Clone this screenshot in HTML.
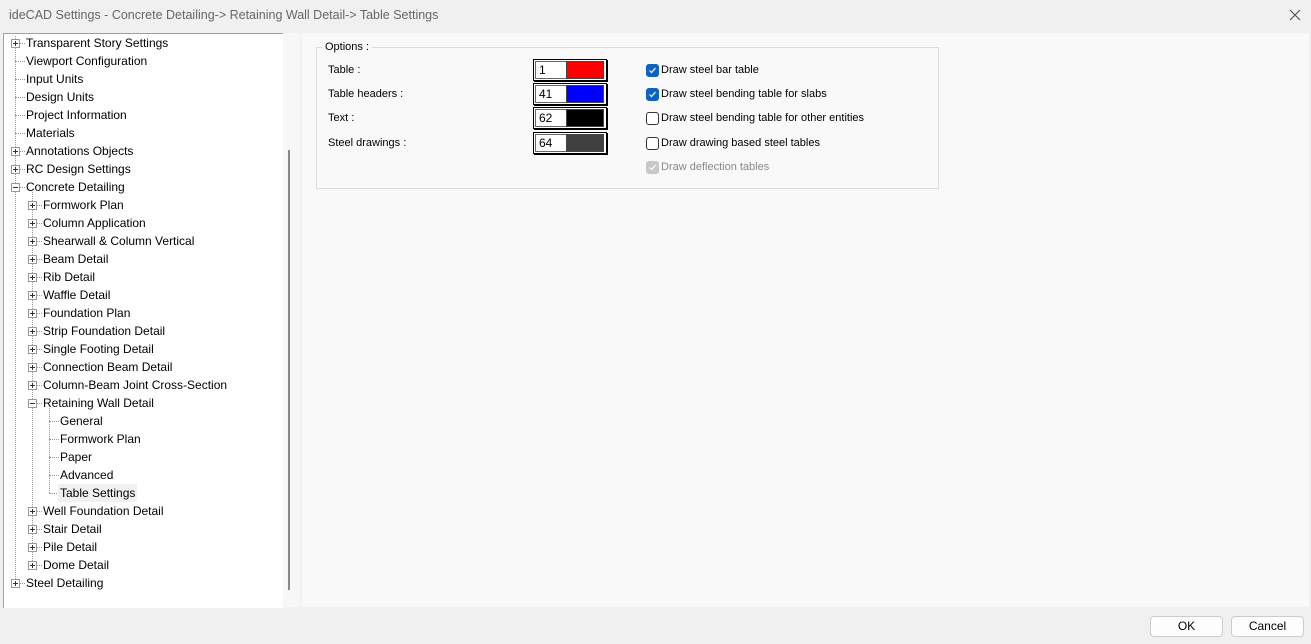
<!DOCTYPE html>
<html><head><style>
body{margin:0;width:1311px;height:644px;background:#f0f0f0;font-family:"Liberation Sans",sans-serif;font-size:12px;color:#000;position:relative;overflow:hidden}
.a{position:absolute;white-space:nowrap}
.title{left:9px;top:8px;color:#666;font-size:12.5px}
#tree{position:absolute;left:3px;top:33px;width:280px;height:574px;background:#fff;border-left:1px solid #a0a0a0;border-top:1px solid #a0a0a0}
#sb{position:absolute;left:283px;top:33px;width:17px;height:574px;background:#f7f7f7}
#thumb{position:absolute;left:288px;top:150px;width:2px;height:440px;background:#888}
.r{position:absolute;height:18px;line-height:18px;white-space:nowrap}
.bx{position:absolute;width:7px;height:7px;border:1px solid #999;background:#fff}
.bx:before{content:"";position:absolute;left:1px;top:3px;width:5px;height:1px;background:#333}
.p:after{content:"";position:absolute;left:3px;top:1px;width:1px;height:5px;background:#333}
.vl{position:absolute;border-left:1px dotted #999;width:0}
.hl{position:absolute;border-top:1px dotted #999;height:0}
#right{position:absolute;left:302px;top:33px;width:1007px;height:574px;background:#f9f9f9}
.grp{position:absolute;left:316px;top:47px;width:621px;height:140px;border:1px solid #dcdcdc}
.cb{position:absolute;width:11px;height:11px;border:1px solid #333;border-radius:3px;background:#fff}
.cb.on{background:#0f62c0;border-color:#0f62c0}
.cb.dis{background:#c8c8c8;border-color:#c8c8c8}
.cb svg{position:absolute;left:1px;top:1px}
.col{position:absolute;left:533px;width:72px;height:20px;border:1px solid #000;box-shadow:1px 1px 0 #000;background:#fff}
.col .n{position:absolute;left:1px;top:1px;width:28px;height:16px;border:1px solid #666;line-height:16px;padding-left:3px;font-size:12px}
.col .c{position:absolute;left:32px;top:1px;width:36px;height:16px;border:1px solid #444}
.btn{position:absolute;top:616px;width:71px;height:19px;border:1px solid #ccc;border-radius:4px;background:#fdfdfd;text-align:center;line-height:19px}
</style></head><body>
<div class="a title">ideCAD Settings - Concrete Detailing-&gt; Retaining Wall Detail-&gt; Table Settings</div>
<svg class="a" style="left:1289px;top:9px" width="12" height="12"><path d="M1 1L11 11M11 1L1 11" stroke="#555" stroke-width="1.2"/></svg>
<div id="tree"></div>
<div id="sb"></div><div id="thumb"></div>
<div id="right"></div>
<div class="grp"></div>
<div class="a" style="left:322px;top:41px;background:#f9f9f9;padding:0 3px;font-size:11px">Options :</div>
<div class="a" style="left:328px;top:64px;font-size:11px">Table :</div>
<div class="a" style="left:328px;top:88px;font-size:11px">Table headers :</div>
<div class="a" style="left:328px;top:112px;font-size:11px">Text :</div>
<div class="a" style="left:328px;top:137px;font-size:11px">Steel drawings :</div>
<div class="col" style="top:59px"><div class="n">1</div><div class="c" style="background:#f00"></div></div>
<div class="col" style="top:83px"><div class="n">41</div><div class="c" style="background:#00f"></div></div>
<div class="col" style="top:107px"><div class="n">62</div><div class="c" style="background:#000"></div></div>
<div class="col" style="top:132px"><div class="n">64</div><div class="c" style="background:#404040"></div></div>
<div class="cb on" style="left:646px;top:64px"><svg width="9" height="9"><path d="M1.5 4.5L3.5 6.5L7.5 2" stroke="#fff" fill="none" stroke-width="1.2"/></svg></div>
<div class="cb on" style="left:646px;top:88px"><svg width="9" height="9"><path d="M1.5 4.5L3.5 6.5L7.5 2" stroke="#fff" fill="none" stroke-width="1.2"/></svg></div>
<div class="cb" style="left:646px;top:112px"></div>
<div class="cb" style="left:646px;top:137px"></div>
<div class="cb dis" style="left:646px;top:161px"><svg width="9" height="9"><path d="M1.5 4.5L3.5 6.5L7.5 2" stroke="#fff" fill="none" stroke-width="1.2"/></svg></div>
<div class="a" style="left:661px;top:64px;font-size:11px">Draw steel bar table</div>
<div class="a" style="left:661px;top:88px;font-size:11px">Draw steel bending table for slabs</div>
<div class="a" style="left:661px;top:112px;font-size:11px">Draw steel bending table for other entities</div>
<div class="a" style="left:661px;top:137px;font-size:11px">Draw drawing based steel tables</div>
<div class="a" style="left:661px;top:161px;font-size:11px;color:#888">Draw deflection tables</div>
<div class="btn" style="left:1150px">OK</div>
<div class="btn" style="left:1231px">Cancel</div>
<div id="items"></div>
<script>
var items=[[0,"Transparent Story Settings","p"],[0,"Viewport Configuration",""],[0,"Input Units",""],[0,"Design Units",""],[0,"Project Information",""],[0,"Materials",""],[0,"Annotations Objects","p"],[0,"RC Design Settings","p"],[0,"Concrete Detailing","m"],
[1,"Formwork Plan","p"],[1,"Column Application","p"],[1,"Shearwall & Column Vertical","p"],[1,"Beam Detail","p"],[1,"Rib Detail","p"],[1,"Waffle Detail","p"],[1,"Foundation Plan","p"],[1,"Strip Foundation Detail","p"],[1,"Single Footing Detail","p"],[1,"Connection Beam Detail","p"],[1,"Column-Beam Joint Cross-Section","p"],[1,"Retaining Wall Detail","m"],
[2,"General",""],[2,"Formwork Plan",""],[2,"Paper",""],[2,"Advanced",""],[2,"Table Settings","s"],
[1,"Well Foundation Detail","p"],[1,"Stair Detail","p"],[1,"Pile Detail","p"],[1,"Dome Detail","p"],[0,"Steel Detailing","p"]];
var h="";
h+='<div class="vl" style="left:15px;top:36px;height:547px"></div>';
h+='<div class="vl" style="left:32px;top:192px;height:373px"></div>';
h+='<div class="vl" style="left:49px;top:408px;height:85px"></div>';
items.forEach(function(it,i){
 var y=34+i*18, cy=y+9, lv=it[0], bx=11+lv*17, tx=26+lv*17;
 h+='<div class="hl" style="left:'+(bx+4)+'px;top:'+cy+'px;width:'+(tx-bx-5)+'px"></div>';
 if(it[2]=="p"||it[2]=="m") h+='<div class="bx '+(it[2]=="p"?"p":"")+'" style="left:'+bx+'px;top:'+(cy-4)+'px"></div>';
 h+='<div class="r" style="left:'+(tx-(it[2]=="s"?2:0))+'px;top:'+y+'px;'+(it[2]=="s"?"background:#f0f0f0;padding:0 2px;":"")+'">'+it[1].replace("&","&amp;")+'</div>';
});
document.getElementById("items").innerHTML=h;
</script>
</body></html>
